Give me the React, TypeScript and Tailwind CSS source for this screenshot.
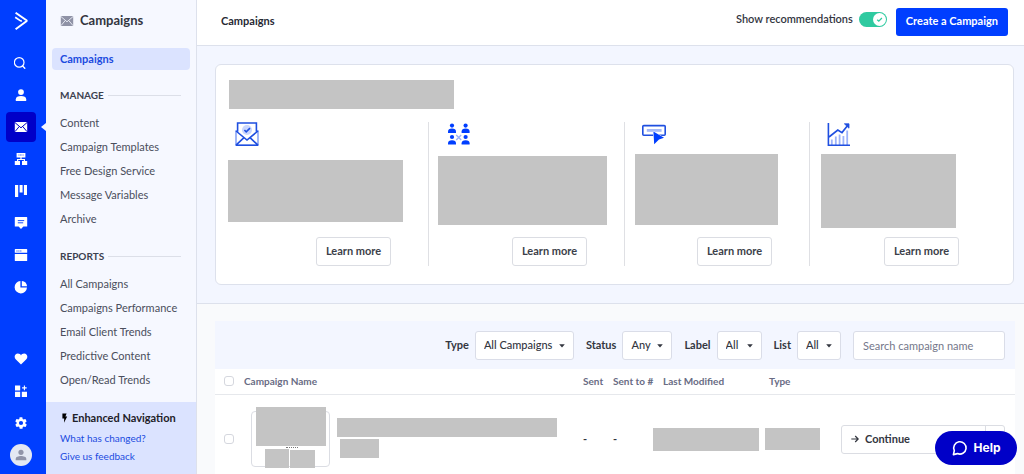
import React from 'react';
import { clsx } from 'clsx';

const manageLinks = ['Content', 'Campaign Templates', 'Free Design Service', 'Message Variables', 'Archive'];
const reportLinks = ['All Campaigns', 'Campaigns Performance', 'Email Client Trends', 'Predictive Content', 'Open/Read Trends'];

function Icon({ children, className = 'size-[14px]', viewBox = '0 0 14 14' }: { children: React.ReactNode; className?: string; viewBox?: string }) {
  return (
    <svg className={className} viewBox={viewBox} fill="currentColor" aria-hidden="true">
      {children}
    </svg>
  );
}

function MailIcon({ line, className }: { line: string; className?: string }) {
  return (
    <Icon className={className} viewBox="0 0 14 12">
      <rect x="0.8" y="1" width="12.4" height="10" rx="0.8" />
      <path d="M1 1.6 L7 6.8 L13 1.6 M1 10.6 L5.2 5.6 M13 10.6 L8.8 5.6" fill="none" stroke={line} strokeWidth="1" />
    </Icon>
  );
}

const railTop = [
  {
    name: 'Search',
    icon: (
      <Icon>
        <circle cx="5.2" cy="6.4" r="4.8" fill="none" stroke="currentColor" strokeWidth="1.2" />
        <path d="M8.6 10 L10.8 12.2" stroke="currentColor" strokeWidth="1.4" strokeLinecap="round" />
      </Icon>
    ),
  },
  {
    name: 'Contacts',
    icon: (
      <Icon>
        <circle cx="7" cy="4.1" r="2.9" />
        <path d="M1.8 13 V11.2 C1.8 9 4 7.9 7 7.9 S12.2 9 12.2 11.2 V13 Z" />
      </Icon>
    ),
  },
  { name: 'Campaigns', icon: <MailIcon line="#0000c8" className="h-3 w-[14px]" />, active: true },
  {
    name: 'Automations',
    icon: (
      <Icon>
        <path d="M2.6 1 H11.4 V5.4 H7.6 V7 H11 V9 H13.2 V13 H8 V9 H9.8 V8 H4.2 V9 H6 V13 H0.8 V9 H3 V7 H6.4 V5.4 H2.6 Z" />
        <path d="M4.4 3 H9.6" stroke="#003eff" strokeWidth="0.8" strokeDasharray="1 0.5" />
      </Icon>
    ),
  },
  {
    name: 'Deals',
    icon: (
      <Icon>
        <path d="M1 1 H4.2 V13 H1 Z M5.6 1 H8.6 V8.6 H5.6 Z M9.9 1 H13 V11 H9.9 Z" />
      </Icon>
    ),
  },
  {
    name: 'Conversations',
    icon: (
      <Icon>
        <path d="M1.4 1 H12.6 Q13.2 1 13.2 1.6 V10.4 H9.4 L7 13 L4.6 10.4 H0.8 V1.6 Q0.8 1 1.4 1 Z" />
        <path d="M3.8 4.6 H10.2 M3.8 6.8 H9.2" stroke="#003eff" strokeWidth="0.9" />
      </Icon>
    ),
  },
  {
    name: 'Website',
    icon: (
      <Icon>
        <path d="M1.4 1 H12.6 Q13.2 1 13.2 1.6 V4.8 H0.8 V1.6 Q0.8 1 1.4 1 Z M0.8 5.9 H13.2 V12.4 Q13.2 13 12.6 13 H1.4 Q0.8 13 0.8 12.4 Z" />
        <path d="M2.4 3 H7.4" stroke="#003eff" strokeWidth="0.9" strokeDasharray="1.2 0.7" />
      </Icon>
    ),
  },
  {
    name: 'Reports',
    icon: (
      <Icon>
        <path d="M6.4 1 V7.6 H13 A6.2 6.2 0 1 1 6.4 1 Z" />
        <path d="M7.8 0.9 A6 6 0 0 1 13.1 6.2 H7.8 Z" />
      </Icon>
    ),
  },
];

const railBottom = [
  {
    name: 'Favorites',
    icon: (
      <Icon>
        <path d="M7 12.6 L1.9 7.6 C-0.6 5 1 1.6 3.9 1.6 C5.4 1.6 6.5 2.4 7 3.4 C7.5 2.4 8.6 1.6 10.1 1.6 C13 1.6 14.6 5 12.1 7.6 Z" />
      </Icon>
    ),
  },
  {
    name: 'Apps',
    icon: (
      <Icon>
        <path d="M1 1.4 H6.2 V6.4 H1 Z M1 7.8 H6.2 V13 H1 Z M7.8 7.8 H13 V13 H7.8 Z" />
        <path d="M10.4 1.6 V6.2 M8.1 3.9 H12.7" stroke="currentColor" strokeWidth="1.1" />
      </Icon>
    ),
  },
  {
    name: 'Settings',
    icon: (
      <Icon viewBox="0 0 24 24">
        <path d="M19.4 13a7.6 7.6 0 0 0 0-2l2.1-1.6a.5.5 0 0 0 .1-.6l-2-3.5a.5.5 0 0 0-.6-.2l-2.5 1a7.4 7.4 0 0 0-1.7-1L14.4 2.4A.5.5 0 0 0 14 2h-4a.5.5 0 0 0-.5.4L9.1 5.1a7.7 7.7 0 0 0-1.7 1l-2.5-1a.5.5 0 0 0-.6.2l-2 3.5a.5.5 0 0 0 .1.6L4.6 11a7.6 7.6 0 0 0 0 2l-2.1 1.6a.5.5 0 0 0-.1.6l2 3.5c.1.2.4.3.6.2l2.5-1a7.3 7.3 0 0 0 1.7 1l.4 2.7c0 .2.2.4.5.4h4c.2 0 .4-.2.5-.4l.4-2.7a7.7 7.7 0 0 0 1.7-1l2.5 1c.2.1.5 0 .6-.2l2-3.5a.5.5 0 0 0-.1-.6zM12 15.6a3.6 3.6 0 1 1 0-7.2 3.6 3.6 0 0 1 0 7.2z" />
      </Icon>
    ),
  },
];

function RailButton({ name, icon, active }: { name: string; icon: React.ReactNode; active?: boolean }) {
  return (
    <button
      type="button"
      aria-label={name}
      className={clsx('relative flex size-[30px] items-center justify-center rounded text-white', active && 'bg-[#0000c8]')}
    >
      {icon}
      {active && (
        <svg className="absolute top-[11px] left-[35px] h-2 w-[5px]" viewBox="0 0 5 8" fill="#f6f8ff" aria-hidden="true">
          <path d="M5 0 V8 L0 4 Z" />
        </svg>
      )}
    </button>
  );
}

function Rail() {
  return (
    <nav aria-label="Main" className="flex w-[46px] shrink-0 flex-col items-start bg-[#003eff] pb-2 pl-[6px]">
      <a href="#home" aria-label="Home" className="flex h-12 w-[30px] items-center justify-center pb-[6px] text-white">
        <Icon className="h-[18px] w-[14px]" viewBox="0 0 14 18">
          <path d="M1.6 0.8 L12.4 8.3 Q13 8.8 12.4 9.3 L1.6 17.2" fill="none" stroke="currentColor" strokeWidth="2" />
          <path d="M1.2 5.2 L6.2 8.6 Q7 9.1 7.8 8.5" fill="none" stroke="currentColor" strokeWidth="1.7" />
        </Icon>
      </a>
      <div className="flex flex-col gap-[2px]">
        {railTop.map((item) => (
          <RailButton key={item.name} {...item} />
        ))}
      </div>
      <div className="mt-auto flex flex-col gap-[2px]">
        {railBottom.map((item) => (
          <RailButton key={item.name} {...item} />
        ))}
      </div>
      <button type="button" aria-label="Account" className="mt-[6px] ml-1 flex size-[22px] items-center justify-center rounded-full bg-[#e4e8f3] text-[#9194a8]">
        <Icon className="size-3">
          <circle cx="7" cy="3.9" r="3" />
          <path d="M0.8 13 V11.6 C0.8 9.2 4 8.2 7 8.2 S13.2 9.2 13.2 11.6 V13 Z" />
        </Icon>
      </button>
    </nav>
  );
}

function NavSection({ title, links }: { title: string; links: string[] }) {
  return (
    <section>
      <h2 className="flex items-center gap-1 pr-[15px] text-[10px] leading-3 font-bold text-[#3c4150]">
        {title}
        <span className="h-px flex-1 bg-[#dcdfe8]" />
      </h2>
      <ul className="mt-[10px]">
        {links.map((link) => (
          <li key={link}>
            <a href="#nav" className="block text-[11px] leading-6 whitespace-nowrap text-[#4a4e5c]">{link}</a>
          </li>
        ))}
      </ul>
    </section>
  );
}

function Sidebar() {
  return (
    <aside className="flex w-[151px] shrink-0 flex-col border-r border-[#dde1ec] bg-[#f6f8ff]">
      <div className="flex h-[42px] items-center gap-[6px] pl-[14px] text-[#8f92a6]">
        <MailIcon line="#e4e7f1" className="h-3 w-[14px]" />
        <span className="text-[13px] font-bold text-[#33363f]">Campaigns</span>
      </div>
      <a href="#campaigns" className="mx-[6px] mt-[6px] block rounded bg-[#dbe3ff] pl-2 text-[11px] leading-[22px] font-bold text-[#1b4be0]">
        Campaigns
      </a>
      <div className="mt-[19px] flex flex-col gap-[19px] pl-[14px]">
        <NavSection title="MANAGE" links={manageLinks} />
        <NavSection title="REPORTS" links={reportLinks} />
      </div>
      <div className="mt-auto bg-[#dbe3ff] px-[14px] pt-2 pb-[9px]">
        <p className="flex items-center gap-[3px] text-[11px] leading-4 font-bold whitespace-nowrap text-[#1e2129]">
          <Icon className="h-[10px] w-[9px] text-black" viewBox="0 0 9 10">
            <path d="M2.4 0.4 H6.6 L5.4 3.6 H7.2 L4 9.7 L4.2 5.6 H2.4 Z" />
          </Icon>
          Enhanced Navigation
        </p>
        <a href="#changes" className="mt-[3px] block text-[10px] leading-[18px] text-[#1b4be0]">What has changed?</a>
        <a href="#feedback" className="block text-[10px] leading-[18px] text-[#1b4be0]">Give us feedback</a>
      </div>
    </aside>
  );
}

function Header() {
  return (
    <header className="flex h-[46px] shrink-0 items-center border-b border-[#dde1ec] bg-white pr-4 pb-[2px] pl-6">
      <h1 className="text-[11px] font-bold text-[#272a34]">Campaigns</h1>
      <label className="mr-[9px] mb-1 ml-auto flex items-center gap-[6px] text-[11px] font-semibold text-[#33363f]">
        Show recommendations
        <span className="relative flex h-[15px] w-[28px] items-center justify-end rounded-full bg-[#2fcaa0] pr-px">
          <input type="checkbox" role="switch" defaultChecked className="absolute inset-0 appearance-none" />
          <svg className="size-[13px]" viewBox="0 0 13 13" fill="none" aria-hidden="true">
            <circle cx="6.5" cy="6.5" r="6.5" fill="white" />
            <path d="M4.2 6.7 L5.8 8.1 L8.9 5" stroke="#2fcaa0" strokeWidth="1.3" />
          </svg>
        </span>
      </label>
      <button type="button" className="h-[28px] rounded-[3px] bg-[#003eff] px-[10px] text-[11px] font-bold whitespace-nowrap text-white">
        Create a Campaign
      </button>
    </header>
  );
}

const recommendations = [
  {
    column: '',
    iconClass: 'ml-[7px]',
    block: 'mt-[14px] mr-[25px] h-[62px]',
    icon: (
      <g fill="none" stroke="#1f4fe0" strokeWidth="1.6">
        <path d="M3 9 H1 V23.2 H23 V9 H21" stroke="#8aa5f5" />
        <path d="M1 9 L12 18 L23 9 M1 23.2 L9 15.6 M23 23.2 L15 15.6 M1 23.2 H23" />
        <path d="M2.6 9.8 V1 H21.4 V9.8" />
        <circle cx="12" cy="8" r="5" fill="#c9d6ff" stroke="none" />
        <path d="M9.4 8 L11.2 9.8 L15 6.2" />
      </g>
    ),
  },
  {
    column: 'border-l border-[#dfe0e4]',
    iconClass: 'ml-[18px]',
    block: 'mt-[10px] mr-[17px] ml-[9px] h-[69px]',
    icon: (
      <g fill="#003eff">
        <circle cx="5" cy="3.6" r="2.1" />
        <path d="M1 11 V9.6 Q1 6.6 5 6.6 T9 9.6 V11 Z" />
        <circle cx="18.6" cy="3.6" r="2.1" />
        <path d="M14.6 11 V9.6 Q14.6 6.6 18.6 6.6 T22.6 9.6 V11 Z" />
        <circle cx="5" cy="15" r="2.1" />
        <path d="M1 22.6 V21.2 Q1 18.2 5 18.2 T9 21.2 V22.6 Z" />
        <circle cx="18.6" cy="15" r="2.1" />
        <path d="M14.6 22.6 V21.2 Q14.6 18.2 18.6 18.2 T22.6 21.2 V22.6 Z" />
        <path d="M9.2 13 L14.2 18 M14.2 13 L9.2 18" stroke="#9db3fa" strokeWidth="1.4" />
      </g>
    ),
  },
  {
    column: 'border-l border-[#dfe0e4]',
    iconClass: 'ml-[17px]',
    block: 'mt-2 mr-[31px] ml-[10px] h-[71px]',
    icon: (
      <g>
        <rect x="0.8" y="3.6" width="22.4" height="9.6" rx="1" fill="none" stroke="#1f4fe0" strokeWidth="1.6" />
        <rect x="4.8" y="7" width="14.8" height="2.8" fill="#a5b9f8" />
        <path d="M11.4 9.6 L22 15.8 L17 17.4 L12.2 22.2 Z" fill="#003eff" stroke="white" strokeWidth="1" paintOrder="stroke" />
      </g>
    ),
  },
  {
    column: 'border-l border-[#dfe0e4]',
    iconClass: 'ml-[17px]',
    block: 'mt-2 mr-10 ml-[11px] h-[74px]',
    icon: (
      <g fill="none" stroke="#1f4fe0" strokeWidth="1.6">
        <path d="M4.8 23 V17.6 M8.8 23 V14.4 M12.6 23 V12.6 M16.4 23 V14 M20.2 23 V8.6" stroke="#9db3fa" strokeWidth="1.8" />
        <path d="M1.4 1 V23.2 H23" />
        <path d="M2 15 L10.8 8 L15 10.6 L21 3" />
        <path d="M17.4 1.8 H22 V6.2 Z" fill="#1f4fe0" strokeWidth="0.8" />
      </g>
    ),
  },
];

function Recommendations() {
  return (
    <section aria-label="Recommendations" className="border-b border-[#dde1ec] bg-[#f3f6ff] pt-[18px] pr-[10px] pb-[18px] pl-[18px]">
      <div className="rounded-md border border-[#dde1ec] bg-white pt-[15px] pr-[17px] pb-[18px] pl-3">
        <div className="ml-px h-[29px] w-[225px] bg-[#c4c4c4]" />
        <div className="mt-[13px] grid grid-cols-[200fr_196fr_185fr_187fr]">
          {recommendations.map((item, index) => (
            <article key={index} className={clsx('flex h-36 flex-col', item.column)}>
              <svg className={clsx('size-6 shrink-0', item.iconClass)} viewBox="0 0 24 24" aria-hidden="true">
                {item.icon}
              </svg>
              <div className={clsx('bg-[#c4c4c4]', item.block)} />
              <button
                type="button"
                className="mt-auto mr-[37px] h-[29px] w-[75px] self-end rounded-[3px] border border-[#dbdde3] bg-white text-[11px] font-bold whitespace-nowrap text-[#3c3f49]"
              >
                Learn more
              </button>
            </article>
          ))}
        </div>
      </div>
    </section>
  );
}

const filters = [
  { label: 'Type', value: 'All Campaigns', width: 'w-[99px]' },
  { label: 'Status', value: 'Any', width: 'w-[50px]' },
  { label: 'Label', value: 'All', width: 'w-[45px]' },
  { label: 'List', value: 'All', width: 'w-[44px]' },
];

function Filters() {
  return (
    <div className="flex h-[48px] items-center justify-end gap-3 bg-[#f3f6ff] pr-[10px] text-[11px] text-[#33363f]">
      {filters.map(({ label, value, width }) => (
        <label key={label} className="flex items-center gap-[6px] font-bold">
          {label}
          <span className={clsx('relative', width)}>
            <select className="h-[29px] w-full appearance-none rounded-[3px] border border-[#dadde8] bg-white pl-2 text-[11px] font-medium">
              <option>{value}</option>
            </select>
            <svg className="pointer-events-none absolute top-[13px] right-[9px] h-1 w-[6px]" viewBox="0 0 6 4" fill="#33363f" aria-hidden="true">
              <path d="M0.2 0.3 H5.8 L3 3.6 Z" />
            </svg>
          </span>
        </label>
      ))}
      <input
        type="search"
        aria-label="Search campaign name"
        placeholder="Search campaign name"
        className="h-[29px] w-[152px] rounded-[3px] border border-[#dadde8] bg-white px-[9px] text-[11px] placeholder:text-[#74778a]"
      />
    </div>
  );
}

const checkbox = 'block size-[10px] appearance-none rounded-[3px] border border-[#d5d7de] bg-white';

function CampaignTable() {
  return (
    <table className="w-full table-fixed bg-white text-left text-[11px] text-[#33363f]">
      <colgroup>
        <col className="w-[29px]" />
        <col />
        <col className="w-[30px]" />
        <col className="w-[40px]" />
        <col className="w-[112px]" />
        <col className="w-[76px]" />
        <col className="w-[174px]" />
      </colgroup>
      <thead>
        <tr className="h-[25px] border-b border-[#e6e8ec] text-[10px] whitespace-nowrap text-[#696c84] [&>th]:font-bold">
          <th className="pl-[9px]"><input type="checkbox" aria-label="Select all campaigns" className={checkbox} /></th>
          <th>Campaign Name</th>
          <th>Sent</th>
          <th>Sent to #</th>
          <th className="pl-[10px]">Last Modified</th>
          <th className="pl-1">Type</th>
          <th aria-label="Actions" />
        </tr>
      </thead>
      <tbody>
        <tr className="h-[90px]">
          <td className="pl-[9px]"><input type="checkbox" aria-label="Select campaign" className={checkbox} /></td>
          <td>
            <div className="flex items-center gap-[7px] pl-[7px]">
              <div className="relative h-14 w-[79px] shrink-0 rounded border border-[#dbdde3]">
                <div className="absolute -top-[5px] left-1 h-[39px] w-[70px] bg-[#c4c4c4]" />
                <div className="absolute top-[35px] left-[34px] w-[12px] border-t border-dotted border-[#777777]" />
                <div className="absolute top-[37px] left-[13px] h-[19px] w-6 bg-[#c4c4c4]" />
                <div className="absolute top-[38px] left-[38px] h-[18px] w-[25px] bg-[#c4c4c4]" />
              </div>
              <div className="pb-[2px]">
                <div className="h-[19px] w-[220px] bg-[#c4c4c4]" />
                <div className="mt-[2px] ml-[3px] h-[19px] w-[39px] bg-[#c4c4c4]" />
              </div>
            </div>
          </td>
          <td className="font-bold">-</td>
          <td className="font-bold">-</td>
          <td><div className="h-[23px] w-[106px] bg-[#c4c4c4]" /></td>
          <td><div className="h-[22px] w-[55px] bg-[#c4c4c4]" /></td>
          <td className="pr-[10px]">
            <div className="flex h-[29px] rounded-[3px] border border-[#dbdde3]">
              <button type="button" className="flex flex-1 items-center gap-[6px] pl-[9px] font-bold">
                <svg className="size-2" viewBox="0 0 8 8" fill="none" stroke="currentColor" strokeWidth="1.2" aria-hidden="true">
                  <path d="M0.3 4 H7 M4.2 1 L7.2 4 L4.2 7" />
                </svg>
                Continue
              </button>
              <button type="button" aria-label="More actions" className="w-[19px] border-l border-[#dbdde3]" />
            </div>
          </td>
        </tr>
      </tbody>
    </table>
  );
}

function HelpButton() {
  return (
    <button
      type="button"
      className="fixed right-[7px] bottom-[9px] flex h-[34px] w-[82px] items-center justify-center gap-[6px] rounded-full bg-[#0000c8] font-['Inter',sans-serif] text-[12px] font-bold text-white"
    >
      <svg className="size-4" viewBox="0 0 16 16" fill="none" stroke="currentColor" strokeWidth="1.6" aria-hidden="true">
        <path d="M2.3 10.6 A6.2 6.2 0 1 1 5.4 13.6 L1.4 14.6 Z" strokeLinejoin="round" />
      </svg>
      Help
    </button>
  );
}

function App() {
  return (
    <div className="flex h-screen overflow-hidden font-['Lato','Liberation_Sans',sans-serif]">
      <Rail />
      <Sidebar />
      <div className="flex min-w-0 flex-1 flex-col bg-[#f9fafc]">
        <Header />
        <main className="min-h-0 flex-1 overflow-hidden">
          <Recommendations />
          <section aria-label="Campaign list" className="pt-[17px] pr-[9px] pl-[18px]">
            <Filters />
            <CampaignTable />
          </section>
        </main>
      </div>
      <HelpButton />
    </div>
  );
}

export default App;
